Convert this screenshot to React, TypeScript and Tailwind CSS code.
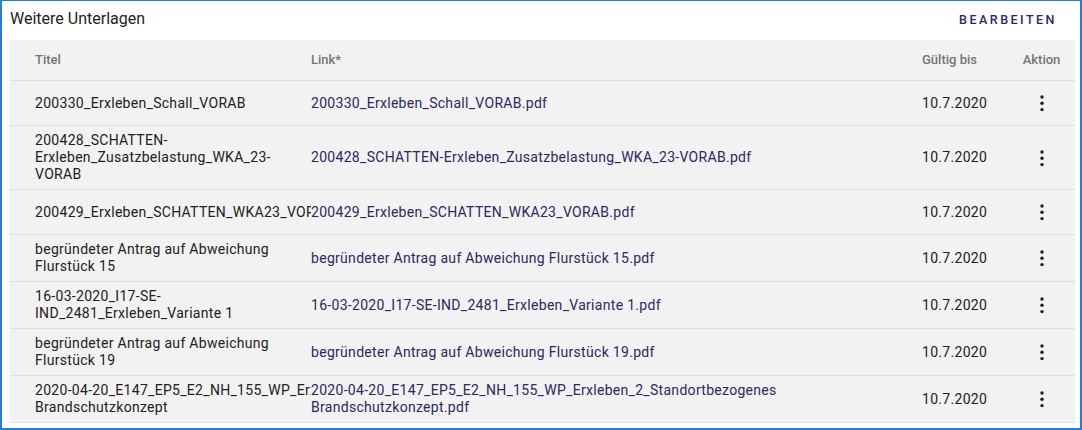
type Row = { title: string; keep?: string; link: string };

const rows: Row[] = [
  { title: "200330_Erxleben_Schall_VORAB", link: "200330_Erxleben_Schall_VORAB.pdf" },
  {
    title: "200428_SCHATTEN-Erxleben_Zusatzbelastung_WKA_23-VORAB",
    link: "200428_SCHATTEN-Erxleben_Zusatzbelastung_WKA_23-VORAB.pdf",
  },
  { title: "200429_Erxleben_SCHATTEN_WKA23_VORAB", link: "200429_Erxleben_SCHATTEN_WKA23_VORAB.pdf" },
  { title: "begründeter Antrag auf Abweichung Flurstück 15", link: "begründeter Antrag auf Abweichung Flurstück 15.pdf" },
  {
    title: "16-03-2020_I17-SE-IND_2481_Erxleben_Variante 1",
    link: "16-03-2020_I17-SE-IND_2481_Erxleben_Variante 1.pdf",
  },
  { title: "begründeter Antrag auf Abweichung Flurstück 19", link: "begründeter Antrag auf Abweichung Flurstück 19.pdf" },
  {
    keep: "2020-04-20_E147_EP5_E2_NH_155_WP_Erxleben_2_Standortbezogenes",
    title: " Brandschutzkonzept",
    link: "2020-04-20_E147_EP5_E2_NH_155_WP_Erxleben_2_Standortbezogenes Brandschutzkonzept.pdf",
  },
];

const MoreVert = () => (
  <svg width="24" height="24" viewBox="0 0 24 24" fill="#1f1f1f">
    <circle cx="12" cy="6" r="1.7" />
    <circle cx="12" cy="12.3" r="1.7" />
    <circle cx="12" cy="18.6" r="1.7" />
  </svg>
);

const grid = "grid grid-cols-[301px_611px_87px_65px] items-center border-b border-[#e0e0e0]";

export default function App() {
  return (
    <div className="w-[1082px] h-[430px] bg-white font-['Roboto',sans-serif]">
      <div className="h-full border-x-2 border-b-2 border-t border-[#1f7fe3] pl-2 pr-[5px]">
        <div className="flex h-[39px] items-start justify-between pt-[6px]">
          <h2 className="text-[16px] leading-6 text-[#212121]">Weitere Unterlagen</h2>
          <button className="mr-[18px] mt-[3px] text-[12.5px] font-medium leading-5 tracking-[0.2em] text-[#2b2862]">
            BEARBEITEN
          </button>
        </div>
        <div className="bg-[#f2f2f2]">
          <div className={`${grid} h-[41px] text-[13px] font-medium text-[#757575]`}>
            <div className="pl-[25px]">Titel</div>
            <div>Link*</div>
            <div>Gültig bis</div>
            <div className="text-center">Aktion</div>
          </div>
          {rows.map((r) => (
            <div
              key={r.link}
              className={`${grid} min-h-[45px] py-[6px] text-[14px] leading-[17px] tracking-[0.3px]`}
            >
              <div className="overflow-hidden pl-[25px] text-[#212121]">
                {r.keep && <span className="whitespace-nowrap">{r.keep}</span>}
                {r.title}
              </div>
              <div className="pr-4 text-[#2b2862]">{r.link}</div>
              <div className="text-[#212121]">10.7.2020</div>
              <div className="flex justify-center">
                <MoreVert />
              </div>
            </div>
          ))}
        </div>
      </div>
    </div>
  );
}
